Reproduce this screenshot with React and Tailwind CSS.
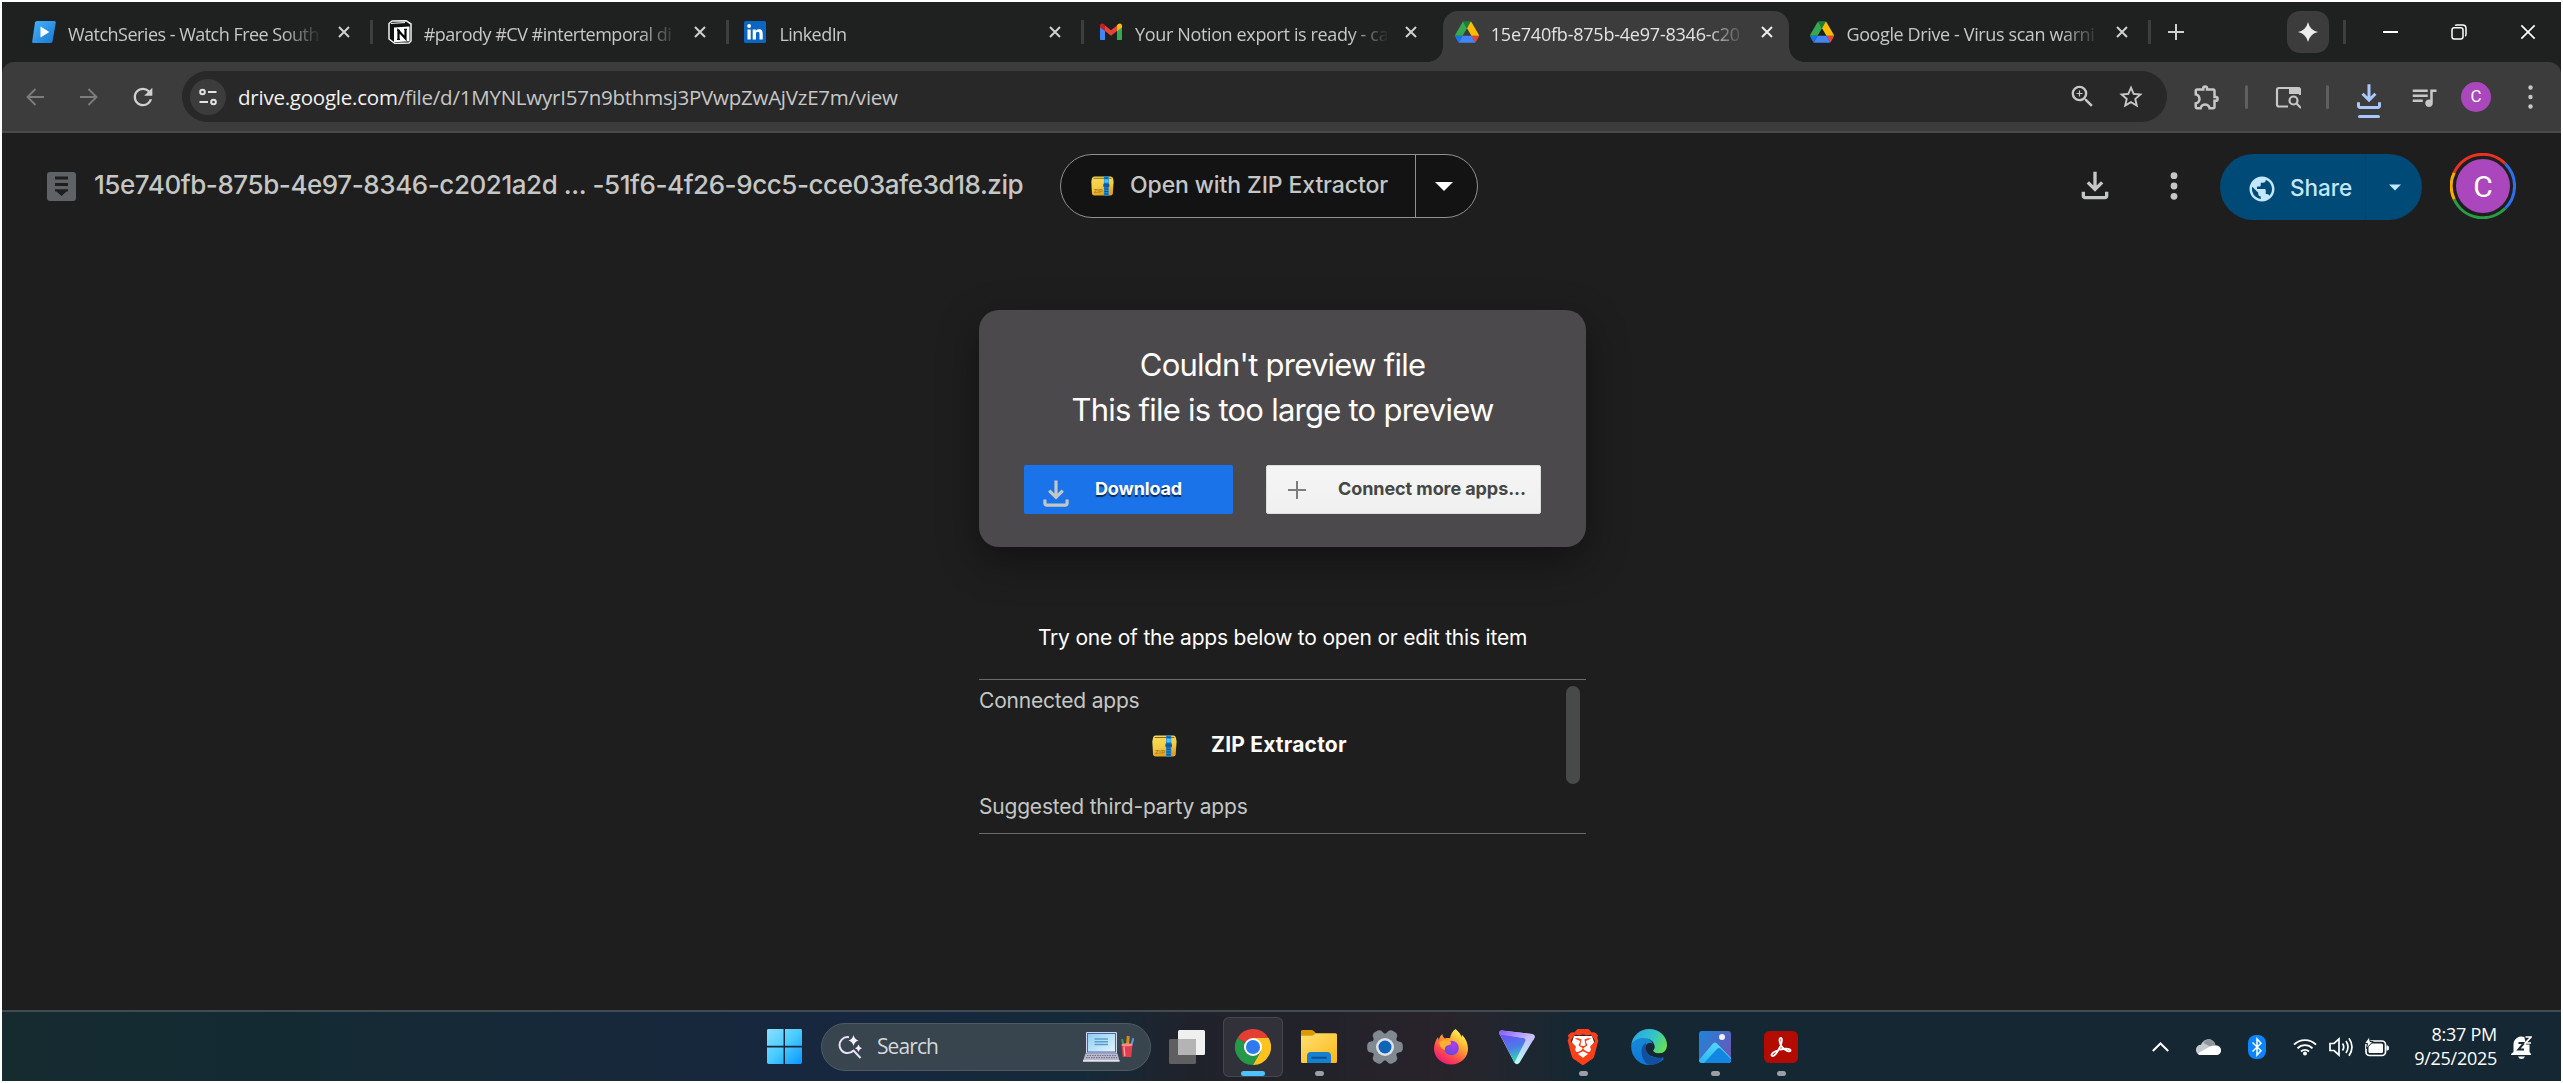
import { MdOutlineExtension, MdStarBorder, MdZoomIn, MdQueueMusic, MdPublic, MdRefresh } from "react-icons/md";
import { SiBrave } from "react-icons/si";
import clsx from "clsx";

/* ---------- favicons ---------- */

const PlayFavicon = () => (
  <svg viewBox="0 0 24 24" className="size-6 shrink-0">
    <defs>
      <linearGradient id="play" x1="0" y1="0" x2="1" y2="1">
        <stop offset="0" stopColor="#45b2ff" />
        <stop offset="1" stopColor="#1878d0" />
      </linearGradient>
    </defs>
    <path d="M5 1h17.500q1.500 0 1.300 1.500L20.500 21.500q-.3 1.500-2 1.500H1.200Q0 23 .2 21.500L3 2.500Q3.300 1 5 1z" fill="url(#play)" />
    <path d="M8.500 6.500v11l8.800-5.500z" fill="#fff" />
  </svg>
);

const NotionFavicon = () => (
  <svg viewBox="0 0 24 24" className="size-6 shrink-0">
    <path d="M1 3.500 4 1l14-.3L23 4v17l-2 2-14 .5L1 19z" fill="#111" stroke="#f1f1f1" strokeWidth="1.500" strokeLinejoin="round" />
    <path d="M3 3.400 17 2.600" stroke="#fff" strokeWidth="1" />
    <path d="M6 7.500 21.500 6.500v14.800L6 22.200z" fill="#fff" />
    <path d="M10.500 19.500v-8.700l7 7.700V9.500" fill="none" stroke="#000" strokeWidth="2.200" />
    <path d="M9 10.300h3M9 19.300h3M16 9.300h3" stroke="#000" strokeWidth="1.200" />
  </svg>
);

const LinkedInFavicon = () => (
  <svg viewBox="0 0 24 24" className="size-6 shrink-0">
    <rect x="1" y="1" width="22" height="22" rx="1.500" fill="#0a66c2" />
    <path d="M4.500 9.500h3.200v10H4.500zM9.700 9.500h3v1.400c.6-1 1.700-1.700 3.300-1.700 2.900 0 3.700 1.800 3.700 4.600v5.700h-3.200v-5.100c0-1.400-.2-2.600-1.700-2.600s-1.900 1.200-1.900 2.500v5.200H9.700z" fill="#fff" />
    <circle cx="6.100" cy="6" r="1.900" fill="#fff" />
  </svg>
);

const GmailFavicon = () => (
  <svg viewBox="0 0 24 24" className="size-6 shrink-0">
    <path d="M1 6v13.500A1.500 1.500 0 0 0 2.500 20H6V10z" fill="#4285f4" />
    <path d="M23 6v13.500a1.500 1.500 0 0 1-1.500.5H18V10z" fill="#34a853" />
    <path d="M6 11V5.500l6 4.700 6-4.700V11l-6 4.700z" fill="#ea4335" />
    <path d="M1 6.500V6c0-2.500 2.500-3 4-1.800l1 .8v6L1 7.500z" fill="#c5221f" />
    <path d="M23 6.500V6c0-2.500-2.500-3-4-1.800l-1 .8v6l5-3.500z" fill="#fbbc04" />
  </svg>
);

const DriveFavicon = () => (
  <svg viewBox="0 0 87.300 78" className="h-[22px] w-6 shrink-0">
    <path d="m6.600 66.850 3.850 6.650c.8 1.400 1.950 2.500 3.300 3.300l13.750-23.800h-27.500c0 1.550.4 3.100 1.200 4.500z" fill="#1a73e8" />
    <path d="m43.650 25-13.750-23.800c-1.350.8-2.500 1.900-3.300 3.300l-25.400 44a9.060 9.060 0 0 0-1.200 4.500h27.500z" fill="#34a853" />
    <path d="m73.550 76.800c1.350-.8 2.500-1.900 3.300-3.300l1.600-2.750 7.650-13.250c.8-1.400 1.200-2.950 1.200-4.500h-27.502l5.852 11.500z" fill="#ea4335" />
    <path d="m43.650 25 13.750-23.800c-1.350-.8-2.900-1.200-4.500-1.200h-18.500c-1.600 0-3.150.45-4.500 1.200z" fill="#188038" />
    <path d="m59.800 53h-32.300l-13.750 23.800c1.350.8 2.900 1.200 4.500 1.200h50.800c1.600 0 3.150-.45 4.500-1.200z" fill="#4285f4" />
    <path d="m73.400 26.500-12.700-22c-.8-1.400-1.950-2.500-3.300-3.300l-13.750 23.800 16.150 28h27.450c0-1.550-.4-3.100-1.200-4.500z" fill="#fbbc04" />
  </svg>
);

/* ---------- shared icons ---------- */

const Cross = ({ className }) => (
  <svg viewBox="0 0 12 12" className={className} fill="none" stroke="currentColor">
    <path d="M1 1l10 10M11 1 1 11" />
  </svg>
);

const DownloadIcon = ({ className }) => (
  <svg viewBox="0 0 24 24" className={className} fill="currentColor">
    <path d="M18 15.500V18H6v-2.500H4V18c0 1.100.9 2 2 2h12c1.100 0 2-.9 2-2v-2.500zM17 10.500l-1.410-1.410L13 11.670V3.500h-2v8.170L8.410 9.090 7 10.500l5 5z" />
  </svg>
);

const ZipIcon = ({ className }) => (
  <svg viewBox="0 0 24 24" preserveAspectRatio="none" className={className}>
    <defs>
      <linearGradient id="zip" x1="0" y1="0" x2="0.300" y2="1">
        <stop offset="0" stopColor="#f5dc62" />
        <stop offset="0.600" stopColor="#f3cd46" />
        <stop offset="1" stopColor="#e3a11b" />
      </linearGradient>
    </defs>
    <path d="M3.500.5h17q2 0 2.500 2.500l.6 4-.8 14q-.3 2.500-2.500 2.500H3.500Q1.300 23.500 1 21L.3 7 1 3Q1.500.5 3.500.5z" fill="url(#zip)" />
    <path d="M2.500 2.700h19" stroke="#8a6412" strokeWidth="1.100" />
    <rect x="13.500" y=".3" width="5" height="23.400" fill="#1b86d6" />
    <path d="M14 2.500h4M14 15.500h4M14 18.500h4M14 21.500h4" stroke="#0c4f8e" strokeWidth="1.200" />
    <rect x="14" y="4" width="4" height="4" fill="#3fc6ff" />
    <rect x="12.800" y="9" width="6.400" height="4.500" rx="1.500" fill="#175a9c" />
    <text x="3" y="20.500" className="text-[6px] font-bold" fontFamily="Roboto, sans-serif" fill="#b97d14">ZIP</text>
  </svg>
);

const Dots = ({ className, r = 2.300 }) => (
  <svg viewBox="0 0 8 28" className={clsx("shrink-0", className)} fill="currentColor">
    <circle cx="4" cy={r + 0.300} r={r} />
    <circle cx="4" cy="14" r={r} />
    <circle cx="4" cy={27.700 - r} r={r} />
  </svg>
);

/* ---------- browser tab strip ---------- */

const tabs = [
  { icon: PlayFavicon, title: "WatchSeries - Watch Free South", tracking: "tracking-[-0.52px]", sep: true },
  { icon: NotionFavicon, title: "#parody #CV #intertemporal di", tracking: "tracking-[-0.5px]", sep: true },
  { icon: LinkedInFavicon, title: "LinkedIn", tracking: "tracking-[-0.55px]", sep: true },
  { icon: GmailFavicon, title: "Your Notion export is ready - ca", tracking: "tracking-[-0.36px]" },
  { icon: DriveFavicon, title: "15e740fb-875b-4e97-8346-c20", tracking: "tracking-[-0.22px]", active: true },
  { icon: DriveFavicon, title: "Google Drive - Virus scan warni", tracking: "tracking-[-0.38px]", sep: true },
];

function Tab({ icon: Icon, title, tracking, active, sep }) {
  return (
    <div className="flex h-full w-[355.7px] shrink-0 items-end">
      <div className={clsx("relative flex h-[51px] w-[346px] shrink-0 items-center rounded-t-[15px] pb-[9px] pl-3", active && "bg-[#3c3c3c]")}>
        {active && (
          <>
            <span className="absolute bottom-0 -left-[15px] size-[15px] bg-[radial-gradient(circle_at_0_0,transparent_14.5px,#3c3c3c_15px)]" />
            <span className="absolute -right-[15px] bottom-0 size-[15px] bg-[radial-gradient(circle_at_100%_0,transparent_14.5px,#3c3c3c_15px)]" />
          </>
        )}
        <Icon />
        <span
          className={clsx(
            "mt-[3px] ml-3 w-[252px] text-[18px] leading-6 whitespace-nowrap",
            "[mask-image:linear-gradient(90deg,#000_215px,transparent_254px)]",
            tracking,
            active ? "text-[#e3e3e3]" : "text-[#c7c7c7]",
          )}
        >
          {title}
        </span>
        <Cross className={clsx("ml-[18px] size-3 stroke-2", active ? "text-[#ececec]" : "text-[#d0d0d0]")} />
      </div>
      <span className={clsx("mb-[18px] ml-1 h-6 w-[3px]", sep && "bg-[#3d3f3e]")} />
    </div>
  );
}

function TabStrip() {
  return (
    <div className="flex h-[60px] shrink-0 items-center pl-[18px]">
      {tabs.map((t) => (
        <Tab key={t.title} {...t} />
      ))}
      <svg viewBox="0 0 16 16" className="ml-[14px] size-4 stroke-2 text-[#d0d0d0]" fill="none" stroke="currentColor">
        <path d="M8 0v16M0 8h16" />
      </svg>
      <div className="ml-[103px] flex h-[42px] w-[42px] items-center justify-center rounded-[13px] bg-[#3c3c3c]">
        <svg viewBox="0 0 20 20" className="size-5" fill="#ececec">
          <path d="M10 0q1.800 8.200 10 10-8.200 1.800-10 10Q8.200 11.800 0 10 8.200 8.200 10 0z" />
        </svg>
      </div>
      <span className="ml-[14px] h-6 w-[3px] bg-[#3d3f3e]" />
      <span className="ml-[37px] h-0.5 w-[15px] bg-white" />
      <svg viewBox="0 0 16 16" className="ml-[53px] size-4" fill="none" stroke="#fff" strokeWidth="1.500">
        <rect x="1" y="3.800" width="11" height="11.200" rx="2.200" />
        <path d="M4 1.500Q4.800.9 6 .9h5.500Q15 .9 15 4.500V10q0 1.500-.8 2.200" />
      </svg>
      <Cross className="ml-[53px] size-4 stroke-[1.2] text-white" />
    </div>
  );
}

/* ---------- toolbar ---------- */

const Arrow = ({ className }) => (
  <svg viewBox="0 0 18 18" className={className} fill="none" stroke="#7d7d7d" strokeWidth="1.800">
    <path d="M18 9H1.500M9.500 1 1.500 9l8 8" />
  </svg>
);

function Toolbar() {
  return (
    <div className="flex h-[71px] shrink-0 items-center rounded-t-[12px] border-b-2 border-[#4a4a4a] bg-[#3c3c3c] pl-6 text-[#c7c7c7]">
      <Arrow className="size-[18px]" />
      <Arrow className="ml-9 size-[18px] rotate-180" />
      <MdRefresh className="ml-[31px] size-7 text-[#d0d0d0]" />
      <div className="ml-[25px] flex h-[51px] w-[1985px] shrink-0 items-center rounded-full bg-[#282828] pr-[22px] pl-2">
        <span className="flex h-9 w-9 items-center justify-center rounded-full bg-[#3c3c3c]">
          <svg viewBox="0 0 18 18" className="size-[18px]" fill="none" stroke="#e3e3e3" strokeWidth="2">
            <circle cx="3.500" cy="4" r="2.300" />
            <path d="M9 4h8.500M.5 14H9" />
            <circle cx="14.500" cy="14" r="2.300" />
          </svg>
        </span>
        <span className="ml-3 text-[20.5px] leading-7 tracking-[-0.23px] whitespace-nowrap text-[#c7c7c7]">
          <span className="text-[#f1f1f1]">drive.google.com</span>/file/d/1MYNLwyrI57n9bthmsj3PVwpZwAjVzE7m/view
        </span>
        <MdZoomIn className="ml-auto size-[29px]" />
        <MdStarBorder className="ml-[20px] size-[28px]" />
      </div>
      <MdOutlineExtension className="ml-[25px] size-[30px]" />
      <span className="ml-[23px] h-6 w-[3px] rounded-full bg-[#5f5f5f]" />
      <svg viewBox="0 0 26 24" className="ml-[27px] h-6 w-[26px]" fill="none" stroke="currentColor" strokeWidth="2.200">
        <path d="M13 21.500H4q-2 0-2-2V5q0-2 2-2h19q2 0 2 2v5" />
        <path d="M14 2h9q2.500 0 2.500 2.500V9H14z" fill="currentColor" stroke="none" />
        <circle cx="18.500" cy="15.500" r="4" />
        <path d="M21.300 18.300 26 23" />
      </svg>
      <span className="ml-[25px] h-6 w-[3px] rounded-full bg-[#5f5f5f]" />
      <div className="ml-[22px] flex flex-col items-center text-[#a8c7fa]">
        <DownloadIcon className="mt-[3px] size-9" />
        <span className="h-[3px] w-[22px] rounded-full bg-[#a8c7fa]" />
      </div>
      <MdQueueMusic className="ml-[22px] size-[30px]" />
      <span className="ml-[22px] flex size-[30px] items-center justify-center rounded-full bg-[#ab47bc] font-['Roboto',sans-serif] text-[17px] text-white">C</span>
      <Dots className="ml-9 h-6 w-[7px]" r={2.600} />
    </div>
  );
}

/* ---------- drive viewer ---------- */

function FileHeader() {
  return (
    <header className="flex h-[106px] shrink-0 items-center pr-[45px] pl-[45px]">
      <svg viewBox="0 0 29 29" className="size-[29px]">
        <rect width="29" height="29" rx="3" fill="#5f6368" />
        <path d="M8 6h13M8 12.500h13" stroke="#1e1e1e" strokeWidth="3" />
        <path d="M8 17.200h13v2.300h-1.500L14.500 24l-5-4.500H8z" fill="#1e1e1e" />
      </svg>
      <h1 className="ml-[18px] w-[930px] pb-[2px] text-[26px] leading-9 font-medium tracking-[-0.43px] whitespace-nowrap text-[#c4c7c5]">
        15e740fb-875b-4e97-8346-c2021a2d ... -51f6-4f26-9cc5-cce03afe3d18.zip
      </h1>
      <button className="ml-9 flex h-16 w-[418px] items-center rounded-full border border-[#8e918f] bg-[#131314] pl-[30px]">
        <ZipIcon className="h-5 w-[23px]" />
        <span className="ml-4 w-[259px] pb-px text-left text-[23px] font-medium tracking-[-0.1px] whitespace-nowrap text-[#c4c7c5]">Open with ZIP Extractor</span>
        <span className="ml-[26px] h-full w-px bg-[#8e918f]" />
        <svg viewBox="0 0 20 9" className="ml-[18px] h-[9px] w-5" fill="#fff">
          <path d="M1 0h18l-9 9z" />
        </svg>
      </button>
      <DownloadIcon className="ml-auto size-10 text-[#c4c7c5]" />
      <Dots className="ml-[55px] h-7 w-2 text-[#c4c7c5]" r={3.400} />
      <div className="mt-[2px] ml-[42px] flex h-[66px] w-[202px] items-center rounded-full bg-[#004a77] text-[#c2e7ff]">
        <MdPublic className="mt-1 ml-[27px] size-[30px]" />
        <span className="mt-[2px] ml-[13px] w-[64px] text-[22.5px] font-medium">Share</span>
        <span className="ml-[11px] h-full w-px bg-[#1f3442]" />
        <svg viewBox="0 0 12 6" className="ml-[23px] h-[7px] w-3" fill="currentColor">
          <path d="M0 0h12L6 6z" />
        </svg>
      </div>
      <div className="relative ml-7 flex size-[66px] items-center justify-center">
        <svg viewBox="0 0 66 66" className="absolute inset-0" fill="none" strokeWidth="3">
          <path d="M4.200 19.700A31.500 31.500 0 0 1 55.300 10.700" stroke="#ea3323" />
          <path d="M55.300 10.700a31.500 31.500 0 0 1 0 44.600" stroke="#2f6fed" />
          <path d="M55.300 55.300A31.500 31.500 0 0 1 4.200 46.300" stroke="#289c46" />
          <path d="M4.200 46.300a31.500 31.500 0 0 1 0-26.600" stroke="#f9ab00" />
        </svg>
        <span className="flex size-[54px] items-center justify-center rounded-full bg-[#ab47bc] font-['Roboto',sans-serif] text-[30px] text-white">C</span>
      </div>
    </header>
  );
}

function PreviewCard() {
  return (
    <section className="mt-[71px] h-[237px] w-[607px] shrink-0 rounded-[20px] bg-[#4c494c] pt-8 shadow-[0_14px_40px_rgba(0,0,0,0.4)]">
      <div className="text-center text-[31px] leading-[45px] tracking-[-0.75px] text-white">
        <p>Couldn't preview file</p>
        <p>This file is too large to preview</p>
      </div>
      <div className="mt-[33px] flex h-[49px] gap-[33px] pl-[45px]">
        <button className="flex w-[209px] items-center rounded-[2px] bg-[#1a73e8] pl-[13px] text-lg font-bold tracking-[-0.15px] text-white">
          <DownloadIcon className="mt-2 size-[38px] text-[#c4c7c5]" />
          <span className="ml-5 pb-px [text-shadow:0_2px_1px_rgba(0,0,0,0.65)]">Download</span>
        </button>
        <button className="flex w-[275px] items-center rounded-[2px] border border-[#dcdcdc] bg-linear-to-b from-[#f5f5f5] to-[#f0f0f0] pl-[21px] text-lg font-bold tracking-[-0.08px] whitespace-nowrap text-[#444746]">
          <svg viewBox="0 0 18 18" className="size-[18px] stroke-2" stroke="#7c7e7d">
            <path d="M9 0v18M0 9h18" />
          </svg>
          <span className="ml-8 pb-px">Connect more apps...</span>
        </button>
      </div>
    </section>
  );
}

function AppList() {
  return (
    <section className="mt-[75px] flex w-[607px] flex-col text-[21px] leading-8 tracking-[-0.2px] text-[#c4c7c5]">
      <p className="text-center text-white">Try one of the apps below to open or edit this item</p>
      <div className="mt-[25px] flex h-[155px] justify-between border-y border-[#6a6c6b] pr-[6px]">
        <div>
          <p className="mt-[5px]">Connected apps</p>
          <div className="mt-3 flex items-center pl-[173px] font-bold tracking-[0.2px] text-white">
            <ZipIcon className="mt-[2px] h-[22px] w-[25px]" />
            <span className="ml-[34px]">ZIP Extractor</span>
          </div>
          <p className="mt-[30px]">Suggested third-party apps</p>
        </div>
        <span className="mt-[6px] h-[98px] w-[14px] rounded-full bg-[#484a4a]" />
      </div>
    </section>
  );
}

/* ---------- taskbar icons ---------- */

const WindowsLogo = () => (
  <svg viewBox="0 0 36 36" className="size-[35px]">
    <defs>
      <linearGradient id="win" gradientUnits="userSpaceOnUse" x1="0" y1="0" x2="36" y2="36">
        <stop offset="0" stopColor="#8be0ff" />
        <stop offset="0.500" stopColor="#48cbff" />
        <stop offset="1" stopColor="#0a94ff" />
      </linearGradient>
    </defs>
    <path d="M1.500 0H17v17.300H0V1.500Q0 0 1.500 0zM18.500 0h16Q36 0 36 1.500v15.800H18.500zM0 19h17v17H1.500Q0 36 0 34.500zM18.500 19H36v15.500q0 1.500-1.500 1.500h-16z" fill="url(#win)" />
  </svg>
);

const SearchSpark = () => (
  <svg viewBox="0 0 24 24" className="size-6" fill="none" stroke="#e6e0f8" strokeWidth="2">
    <path d="M11 2.200A8 8 0 1 0 15.500 15.500M15 15l7.500 8" />
    <path d="M15.500 0q1 4.300 5 5.500-4 1.200-5 5.500-1-4.300-5-5.500 4-1.200 5-5.500zM20.500 9.500q.8 3 3.500 3.800-2.700.8-3.500 3.800-.8-3-3.500-3.800 2.700-.8 3.500-3.800z" fill="#f6effc" stroke="none" />
  </svg>
);

const DeskArt = () => (
  <svg viewBox="0 0 51 30" className="h-[30px] w-[51px]">
    <defs>
      <linearGradient id="screen" x1="0" y1="0" x2="1" y2="1">
        <stop offset="0" stopColor="#8ccdf3" />
        <stop offset="1" stopColor="#e2f6ff" />
      </linearGradient>
    </defs>
    <rect x="3" y="0" width="31" height="21.500" rx="1" fill="#cfd6ee" />
    <rect x="4.500" y="1.500" width="28" height="18.500" fill="url(#screen)" stroke="#4b63b4" strokeWidth="1" />
    <path d="M11.500 7h13.500M11.500 9.700h13.500M11.500 12.400h13.500" stroke="#5c9dce" strokeWidth="1.500" />
    <path d="M2.500 21.500h32L36.500 29H0z" fill="#b9b8cb" />
    <path d="M4 23.500h29M3 25.700h31" stroke="#73748c" strokeWidth="1.200" strokeDasharray="1.500 1" />
    <path d="M0 28h36.500v1.800H0z" fill="#e3e3f0" />
    <path d="m40.500 14-1.500-7" stroke="#3c9a5b" strokeWidth="2" />
    <path d="m44.500 13 .8-9" stroke="#d88a1a" strokeWidth="3" />
    <path d="m48 14 2.500-8" stroke="#5b93d6" strokeWidth="2.200" />
    <path d="M38.500 12.500h11L48.300 25h-8.600z" fill="#e23e4c" />
    <path d="M41 14.500 41.800 24" stroke="#f79aa0" strokeWidth="1.500" />
    <ellipse cx="44" cy="12.700" rx="5.500" ry="1.500" fill="#f98d92" />
  </svg>
);

const TaskView = () => (
  <svg viewBox="0 0 36 34" className="h-[34px] w-9">
    <rect x="0" y="9" width="27" height="25" rx="1.500" fill="#5f5f60" />
    <rect x="9" y="0" width="27" height="25" rx="1.500" fill="#f0f0f0" />
    <rect x="9" y="9" width="18" height="16" fill="#b4b4b5" />
  </svg>
);

const Chrome = () => (
  <svg viewBox="0 0 48 48" className="size-9">
    <path d="M24 24 3.200 12A24 24 0 0 1 44.800 12z" fill="#e53e33" />
    <path d="M24 24 34.400 30 24 48A24 24 0 0 1 3.200 12z" fill="#269847" />
    <path d="M24 12h20.800A24 24 0 0 1 24 48l10.400-18z" fill="#fcc31e" />
    <circle cx="24" cy="24" r="12" fill="#fff" />
    <circle cx="24" cy="24" r="9.400" fill="#2f7bee" />
  </svg>
);

const Folder = () => (
  <svg viewBox="0 0 36 33" className="h-[33px] w-9">
    <defs>
      <linearGradient id="folder" x1="0" y1="0" x2="1" y2="1">
        <stop offset="0" stopColor="#ffdf73" />
        <stop offset="1" stopColor="#fbb917" />
      </linearGradient>
    </defs>
    <path d="M0 1.500Q0 0 1.500 0h9q1.200 0 2 .8L15 3.200V9H0z" fill="#dc9a08" />
    <path d="M0 5.700h11.500L15 3.200h19.500q1.500 0 1.500 1.500v26.800q0 1.500-1.500 1.500h-33Q0 33 0 31.500z" fill="url(#folder)" />
    <path d="M6 33v-7q0-4 4-4h16q4 0 4 4v7z" fill="#1480cf" />
    <path d="M11 27.700h14" stroke="#0b4f96" strokeWidth="2" strokeLinecap="round" />
  </svg>
);

const gearTeeth = [0, 60, 120, 180, 240, 300];

const Settings = () => (
  <svg viewBox="0 0 36 36" className="size-9">
    <g fill="#808890">
      <circle cx="18" cy="18" r="13.500" />
      {gearTeeth.map((a) => (
        <path key={a} d="M28 11.500 34 13q1.500 1 1.800 3v4q-.3 2-1.800 3l-6 1.500z" transform={`rotate(${a} 18 18)`} />
      ))}
    </g>
    <circle cx="18" cy="18" r="9" fill="#dfe3e8" />
    <circle cx="18" cy="18" r="6.500" fill="#0d64b8" />
  </svg>
);

const Firefox = () => (
  <svg viewBox="0 0 36 36" className="size-9">
    <defs>
      <linearGradient id="fox" x1="0.850" y1="0" x2="0.200" y2="1">
        <stop offset="0.100" stopColor="#fff14e" />
        <stop offset="0.400" stopColor="#ffa430" />
        <stop offset="0.700" stopColor="#ff4a4c" />
        <stop offset="1" stopColor="#e5127e" />
      </linearGradient>
      <radialGradient id="foxCore" cx="0.600" cy="0.300" r="0.800">
        <stop offset="0" stopColor="#b13bea" />
        <stop offset="1" stopColor="#5a4be0" />
      </radialGradient>
    </defs>
    <path d="M22.500 0c3 2.500 5.500 5 6 8.500 0-1 .3-2 .8-2.500 3.500 3.500 5.700 8.500 5.700 14 0 8.500-7.500 15.500-16.800 15.500S1 28.500 1 20c0-5 2-9.500 4-12l.8 3.200C6.500 8 8 6 9.500 5.200c0 2 1 3.300 2.500 4.300 2-.8 3.500-.6 5-.2C17.500 5.500 19.500 2 22.500 0z" fill="url(#fox)" />
    <circle cx="18.500" cy="19" r="7.300" fill="url(#foxCore)" />
    <path d="M6 13.500c3-3 7.500-2.500 11-1.500 1.500 1.500 1.500 3-.8 4-3 .5-4.700 2-4.200 5C9 20.500 6.500 17 6 13.500z" fill="#ffae2e" />
  </svg>
);

const ProtonVpn = () => (
  <svg viewBox="0 0 36 36" className="size-9">
    <defs>
      <linearGradient id="vpnA" x1="0" y1="0" x2="1" y2="0.300">
        <stop offset="0" stopColor="#8a5cff" />
        <stop offset="1" stopColor="#c9c0ff" />
      </linearGradient>
      <linearGradient id="vpnB" x1="0.300" y1="0" x2="0.600" y2="1">
        <stop offset="0" stopColor="#6a52f5" />
        <stop offset="0.500" stopColor="#4d7be8" />
        <stop offset="1" stopColor="#2fe0b0" />
      </linearGradient>
      <linearGradient id="vpnC" x1="0.700" y1="0" x2="0.300" y2="1">
        <stop offset="0" stopColor="#c4b6ff" />
        <stop offset="1" stopColor="#b9fff0" />
      </linearGradient>
    </defs>
    <path d="M2.500 1.500 33 5q4 .8 2.300 4.300L20.500 33.800q-2.700 2.700-5 0L.5 5Q-.3 1.300 2.500 1.500z" fill="url(#vpnC)" />
    <path d="M.5 4.500 24.500 9q3 .8 1.600 3.500L15.500 33.500Z" fill="url(#vpnB)" />
    <path d="M2.500 1.500 33 5q3.500.8 2.500 3.500-.5 1.500-1.500 3Q32 9.800 26 9.300L.5 5.500Q-.3 1.300 2.500 1.500z" fill="url(#vpnA)" />
  </svg>
);

const Brave = () => (
  <span className="relative flex size-9 items-center justify-center">
    <svg viewBox="0 0 36 36" className="absolute inset-0">
      <path d="M9 7h18l2 6-4 14-7 5-7-5-4-14z" fill="#fff" />
    </svg>
    <SiBrave className="relative size-9 text-[#fb4018]" />
  </span>
);

const Edge = () => (
  <svg viewBox="0 0 36 36" className="size-9">
    <defs>
      <linearGradient id="edgeTop" x1="0" y1="0.300" x2="1" y2="0.700">
        <stop offset="0" stopColor="#2ba6e8" />
        <stop offset="0.550" stopColor="#35c6c4" />
        <stop offset="1" stopColor="#6be04c" />
      </linearGradient>
      <linearGradient id="edgeLeft" x1="0" y1="0" x2="0.500" y2="1">
        <stop offset="0" stopColor="#1a8ad4" />
        <stop offset="1" stopColor="#0b78dc" />
      </linearGradient>
    </defs>
    <path d="M.3 15.500C3 9 8 7 13 8c5 1 8 4 9 8l-4 10 15 3.500C30 33.500 24 36 18 36 8 36-1 27 .3 15.500z" fill="url(#edgeLeft)" />
    <path d="M.3 15.500C1.500 6.500 9 0 18 0c10.500 0 18 7.500 18 16 0 5-3.500 8.500-8 8.500-3.800 0-6-1.500-6-3 1-1 1.700-2.300 1.500-4.500C23 12 18.500 9 12.500 9 7 9 2.500 11.500.3 15.500z" fill="url(#edgeTop)" />
    <path d="M10.500 22c0-4 2-7 5-8.500-1.500 3-1.500 7 1 10.500 3.500 5 10.500 6 16.500 3.500C30 32.500 25 36 19 36c-5-1-8.500-7-8.500-14z" fill="#124f9f" />
    <path d="M14.500 18.500c0-2.500 2-4.500 4.500-4.500s4.500 1.500 4.500 4c0 1.700-1 2.700-1.500 3.500 0 1.500 2.500 3 6 3 3 0 5-.8 7.500-3-.8 3-2 5-3.500 6.500-5.500 2.500-17.500-1-17.500-9.500z" fill="#142733" />
  </svg>
);

const Photos = () => (
  <svg viewBox="0 0 32 32" className="size-8">
    <defs>
      <linearGradient id="sky" x1="0" y1="0" x2="1" y2="0.600">
        <stop offset="0" stopColor="#1a86dc" />
        <stop offset="1" stopColor="#6659b8" />
      </linearGradient>
      <linearGradient id="hill" x1="0" y1="1" x2="1" y2="0">
        <stop offset="0" stopColor="#2ab4f4" />
        <stop offset="1" stopColor="#5fe0fb" />
      </linearGradient>
    </defs>
    <rect width="32" height="32" rx="3" fill="url(#sky)" />
    <path d="M0 29 13.500 13q2.500-3 5 0L32 27v2q0 3-3 3H3q-3 0-3-3z" fill="url(#hill)" />
    <path d="m5 32 13-14q2-2 4 0l10 10v1q0 3-3 3z" fill="#1287e2" />
    <circle cx="23" cy="6" r="3" fill="#f2f2fb" />
  </svg>
);

const Acrobat = () => (
  <svg viewBox="0 0 34 32" className="h-8 w-[34px]">
    <rect width="34" height="32" rx="5.500" fill="#b30b00" />
    <path d="M16.700 7c2 0 1.300 5-1 9.500-2.500 5-5.500 9-7.500 8.500-2.500-1.500 2-5 8-6.500 6-1.300 10.800-.8 10.300 1.200-.8 2-5.500-.2-8.300-3.500C15.500 13 14.500 7 16.700 7z" fill="none" stroke="#fff" strokeWidth="1.800" />
  </svg>
);

const apps = [
  { icon: Chrome, state: "focused" },
  { icon: Folder, state: "running" },
  { icon: Settings },
  { icon: Firefox },
  { icon: ProtonVpn },
  { icon: Brave, state: "running" },
  { icon: Edge },
  { icon: Photos, state: "running" },
  { icon: Acrobat, state: "running" },
];

function AppButton({ icon: Icon, state }) {
  const focused = state === "focused";
  return (
    <div className={clsx("relative flex size-[60px] items-center justify-center rounded-md", focused && "border border-white/10 bg-white/7")}>
      <Icon />
      {state && (
        <span className={clsx("absolute h-[5px] rounded-full", focused ? "bottom-0 w-6 bg-[#4cc2ff]" : "bottom-px w-[9px] bg-[#9aa0a5]")} />
      )}
    </div>
  );
}

function Tray() {
  return (
    <div className="ml-auto flex items-center pr-[29px] text-white">
      <svg viewBox="0 0 17 10" className="h-[10px] w-[17px]" fill="none" stroke="currentColor" strokeWidth="2">
        <path d="m.8 9 7.700-7.500L16.200 9" />
      </svg>
      <svg viewBox="0 0 25 16" className="ml-[27px] h-4 w-[25px]">
        <path d="M5 16a5 5 0 0 1 0-10.200C7 1 13-1.500 17 2c1.800 1.400 2 2.800 2.300 4 4 0 5.700 3 5.700 5.200A4.800 4.800 0 0 1 20 16z" fill="#c4c9cd" />
        <path d="M7.500 4C9.500 0 14-.8 17 2c1.500 1.200 2 2.500 2.300 4L14 7.500z" fill="#8f979d" />
        <path d="m1.500 14.500 12.500-7q2-1 4-.5c4-.5 7 1.500 7 4.500A4.700 4.700 0 0 1 20 16H5q-2.500 0-3.500-1.500z" fill="#fff" />
      </svg>
      <svg viewBox="0 0 18 24" className="ml-[27px] h-6 w-[18px]">
        <rect width="18" height="24" rx="8" fill="#0a84ff" />
        <path d="m4.500 7.500 8.500 8.200L9 20V4l4 4.300-8.500 8.200" fill="none" stroke="#fff" strokeWidth="1.500" />
      </svg>
      <svg viewBox="0 0 24 18" className="ml-[27px] h-[18px] w-6" fill="none" stroke="currentColor" strokeWidth="1.900">
        <path d="M1 6.700a15.500 15.500 0 0 1 22 0M4.500 10.300a10.500 10.500 0 0 1 15 0M8 13.500a5.700 5.700 0 0 1 8 0" />
        <circle cx="12" cy="15.500" r="2" fill="currentColor" stroke="none" />
      </svg>
      <svg viewBox="0 0 24 20" className="ml-3 h-5 w-6" fill="none" stroke="currentColor" strokeWidth="1.700">
        <path d="M1 6.500h4L10 2v16l-5-4.500H1zM13.500 6.500q2.500 3.500 0 7M17 4q4 6 0 12M20 1.200q6 8.800 0 17.600" />
      </svg>
      <svg viewBox="0 0 24 20" className="ml-3 h-5 w-6">
        <rect x="1" y="4" width="19.500" height="14.500" rx="3.500" fill="none" stroke="currentColor" strokeWidth="1.700" />
        <rect x="3.500" y="6.500" width="14.500" height="9.500" rx="1.500" fill="currentColor" />
        <path d="M21.500 8.500h1q1.500 0 1.500 2.500t-1.500 2.500h-1z" fill="currentColor" />
        <path d="M4.500-.5-.5 6.500h3L1.500 11.500 8 4.500H5z" fill="currentColor" stroke="#142733" />
      </svg>
      <div className="mb-[2px] ml-6 w-[84px] text-right text-[18px] leading-6 tracking-[-0.27px]">
        <p>8:37 PM</p>
        <p>9/25/2025</p>
      </div>
      <svg viewBox="0 0 21 24" className="ml-[14px] h-6 w-[21px]" fill="currentColor">
        <path d="M2.500 17V9.500A8 8 0 0 1 14 2.300l4.500 6V17l1.500 2v1H0v-1zM7 21.500h7q-1 2.500-3.500 2.500T7 21.500z" />
        <path d="M7.500 8h5.500L7.500 14.500H13" fill="none" stroke="#142733" strokeWidth="2" />
        <path d="M13 .5h8v9h-6z" fill="#142733" />
        <path d="M14.500 2H20l-5.500 6H20" fill="none" stroke="currentColor" strokeWidth="1.700" />
      </svg>
    </div>
  );
}

function Taskbar() {
  return (
    <footer className="flex h-[71px] shrink-0 items-center border-t-2 border-[#414b52] bg-[linear-gradient(90deg,#152b30_0px,#142a33_300px,#16283a_620px,#16273f_850px,#152a38_1080px,#20222b_1190px,#23222a_1330px,#29232a_1440px,#23262e_1490px,#142733_1580px,#142733_100%)] pl-[765px]">
      <WindowsLogo />
      <div className="ml-[19px] flex h-12 w-[330px] items-center rounded-full border border-[#4f5a63] bg-[#38454f] pr-4 pl-4">
        <SearchSpark />
        <span className="ml-[15px] pt-px text-[21px] tracking-[-0.9px] text-[#d5d8db]">Search</span>
        <span className="ml-auto">
          <DeskArt />
        </span>
      </div>
      <div className="ml-[18px]">
        <TaskView />
      </div>
      <div className="ml-[18px] flex gap-[6px]">
        {apps.map((a, i) => (
          <AppButton key={i} {...a} />
        ))}
      </div>
      <Tray />
    </footer>
  );
}

export default function App() {
  return (
    <div className="h-[1083px] w-[2563px] overflow-hidden bg-white p-[2px]">
      <div className="flex h-full flex-col bg-[#1f2120] font-['Open_Sans',sans-serif]">
        <TabStrip />
        <Toolbar />
        <main className="flex min-h-0 flex-1 flex-col bg-[#1e1e1e] font-['Inter',sans-serif]">
          <FileHeader />
          <div className="flex flex-col items-center pl-[2px]">
            <PreviewCard />
            <AppList />
          </div>
        </main>
        <Taskbar />
      </div>
    </div>
  );
}
